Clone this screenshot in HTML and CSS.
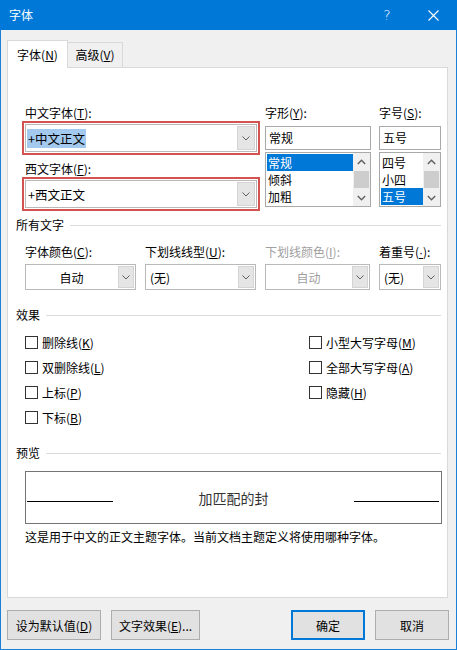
FILE: index.html
```html
<!DOCTYPE html>
<html lang="zh-CN">
<head>
<meta charset="utf-8">
<title>字体</title>
<link rel="stylesheet" href="styles.css">
</head>
<body>
<div class="window">
  <div class="titlebar">
    <span class="title">字体</span>
    <span class="tbtn help">?</span>
    <span class="tbtn close"><svg width="11" height="11" viewBox="0 0 11 11"><path d="M0.5 0.5L10.5 10.5M10.5 0.5L0.5 10.5" stroke="#fff" stroke-width="1.1" fill="none"/></svg></span>
  </div>
  <div class="body">
    <div class="tabs">
      <div class="tab active">字体(<u>N</u>)</div>
      <div class="tab">高级(<u>V</u>)</div>
    </div>
    <div class="panel">
      <div class="top">
        <div class="col col1">
          <div class="label ind">中文字体(<u>T</u>):</div>
          <div class="redbox">
            <div class="combo big">
              <span class="val"><span class="hl">+中文正文</span></span>
              <span class="drop"><svg width="8" height="5" viewBox="0 0 8 5"><path d="M0.5 0.5L4 4L7.5 0.5" stroke="#606060" fill="none"/></svg></span>
            </div>
          </div>
          <div class="label ind l2">西文字体(<u>F</u>):</div>
          <div class="redbox">
            <div class="combo big">
              <span class="val"><span class="plain">+西文正文</span></span>
              <span class="drop"><svg width="8" height="5" viewBox="0 0 8 5"><path d="M0.5 0.5L4 4L7.5 0.5" stroke="#606060" fill="none"/></svg></span>
            </div>
          </div>
        </div>
        <div class="col col2">
          <div class="label">字形(<u>Y</u>):</div>
          <div class="input">常规</div>
          <div class="listbox">
            <div class="items">
              <div class="item selected">常规</div>
              <div class="item">倾斜</div>
              <div class="item">加粗</div>
            </div>
            <div class="scroll">
              <span class="arr"><svg width="9" height="6" viewBox="0 0 9 6"><path d="M0.8 5L4.5 1.2L8.2 5" stroke="#606060" stroke-width="1.4" fill="none"/></svg></span>
              <span class="track"><span class="thumb"></span></span>
              <span class="arr"><svg width="9" height="6" viewBox="0 0 9 6"><path d="M0.8 1L4.5 4.8L8.2 1" stroke="#606060" stroke-width="1.4" fill="none"/></svg></span>
            </div>
          </div>
        </div>
        <div class="col col3">
          <div class="label">字号(<u>S</u>):</div>
          <div class="input">五号</div>
          <div class="listbox">
            <div class="items">
              <div class="item">四号</div>
              <div class="item">小四</div>
              <div class="item selected">五号</div>
            </div>
            <div class="scroll">
              <span class="arr"><svg width="9" height="6" viewBox="0 0 9 6"><path d="M0.8 5L4.5 1.2L8.2 5" stroke="#606060" stroke-width="1.4" fill="none"/></svg></span>
              <span class="track"><span class="thumb"></span></span>
              <span class="arr"><svg width="9" height="6" viewBox="0 0 9 6"><path d="M0.8 1L4.5 4.8L8.2 1" stroke="#606060" stroke-width="1.4" fill="none"/></svg></span>
            </div>
          </div>
        </div>
      </div>

      <div class="sect s1">所有文字</div>
      <div class="fields">
        <div class="field">
          <div class="label">字体颜色(<u>C</u>):</div>
          <div class="combo small"><span class="val center">自动</span><span class="drop"><svg width="8" height="5" viewBox="0 0 8 5"><path d="M0.5 0.5L4 4L7.5 0.5" stroke="#606060" fill="none"/></svg></span></div>
        </div>
        <div class="field">
          <div class="label">下划线线型(<u>U</u>):</div>
          <div class="combo small"><span class="val">(无)</span><span class="drop"><svg width="8" height="5" viewBox="0 0 8 5"><path d="M0.5 0.5L4 4L7.5 0.5" stroke="#606060" fill="none"/></svg></span></div>
        </div>
        <div class="field">
          <div class="label disabled">下划线颜色(<u>I</u>):</div>
          <div class="combo small dis"><span class="val center">自动</span><span class="drop"><svg width="8" height="5" viewBox="0 0 8 5"><path d="M0.5 0.5L4 4L7.5 0.5" stroke="#606060" fill="none"/></svg></span></div>
        </div>
        <div class="field">
          <div class="label">着重号(<u class="dot">·</u>):</div>
          <div class="combo small"><span class="val">(无)</span><span class="drop"><svg width="8" height="5" viewBox="0 0 8 5"><path d="M0.5 0.5L4 4L7.5 0.5" stroke="#606060" fill="none"/></svg></span></div>
        </div>
      </div>

      <div class="sect s2">效果</div>
      <div class="checks">
        <label class="check"><span class="box"></span>删除线(<u>K</u>)</label>
        <label class="check"><span class="box"></span>小型大写字母(<u>M</u>)</label>
        <label class="check"><span class="box"></span>双删除线(<u>L</u>)</label>
        <label class="check"><span class="box"></span>全部大写字母(<u>A</u>)</label>
        <label class="check"><span class="box"></span>上标(<u>P</u>)</label>
        <label class="check"><span class="box"></span>隐藏(<u>H</u>)</label>
        <label class="check"><span class="box"></span>下标(<u>B</u>)</label>
      </div>

      <div class="sect s3">预览</div>
      <div class="preview">
        <span class="pline left"></span>
        <span class="ptext">加匹配的封</span>
        <span class="pline right"></span>
      </div>
      <div class="desc">这是用于中文的正文主题字体。当前文档主题定义将使用哪种字体。</div>
    </div>

    <div class="buttons">
      <div class="btn b1">设为默认值(<u>D</u>)</div>
      <div class="btn b2">文字效果(<u>E</u>)...</div>
      <div class="spacer"></div>
      <div class="btn b3 default">确定</div>
      <div class="btn b4">取消</div>
    </div>
  </div>
</div>
</body>
</html>
```
FILE: styles.css
```css
* { box-sizing: border-box; }
html, body { margin: 0; padding: 0; }
body {
  width: 457px;
  height: 650px;
  overflow: hidden;
  font-family: "Noto Sans CJK SC", "Microsoft YaHei", sans-serif;
  font-size: 12px;
  color: #000;
  background: #f0f0f0;
}
u { text-decoration: underline; text-underline-offset: 1px; }
u.dot { font-family: "Liberation Sans", sans-serif; }

.window {
  width: 457px;
  height: 650px;
  border: 1px solid #1a80d8;
  border-top: 0;
  display: flex;
  flex-direction: column;
  background: #f0f0f0;
}
.titlebar {
  flex: none;
  height: 30px;
  margin: 0 -1px;
  background: #0078d7;
  color: #fff;
  display: flex;
  align-items: center;
}
.title { flex: 1; padding-left: 9px; line-height: 30px; }
.tbtn {
  width: 46px;
  height: 30px;
  display: flex;
  align-items: center;
  justify-content: center;
}
.help { font-size: 14px; font-family: "DejaVu Sans", sans-serif; font-weight: 300; }
.close { width: 47px; }

.body {
  flex: 1;
  display: flex;
  flex-direction: column;
  padding: 10px 8px 0 6px;
}
.tabs {
  height: 27px;
  display: flex;
  align-items: flex-start;
  position: relative;
  z-index: 1;
}
.tab {
  text-align: center;
  border: 1px solid #d9d9d9;
  border-bottom: 0;
}
.tab.active {
  width: 61px;
  height: 28px;
  line-height: 27px;
  background: #fff;
}
.tab:not(.active) {
  width: 55px;
  height: 25px;
  margin-top: 2px;
  line-height: 24px;
  border-left: 0;
  background: #f0f0f0;
}

.panel {
  flex: none;
  height: 531px;
  background: #fff;
  border: 1px solid #d9d9d9;
}

.label { line-height: 16px; height: 16px; white-space: nowrap; }
.label.ind { padding-left: 3px; }
.label.disabled { color: #a0a0a0; }

.top {
  display: flex;
  align-items: flex-start;
  margin: 37px 0 0 14px;
}
.col { display: flex; flex-direction: column; }
.col1 { width: 238px; }
.col2 { width: 106px; margin-left: 5px; }
.col3 { width: 62px; margin-left: 8px; }
.l2 { margin-top: 6px; }

.redbox {
  border: 2px solid #d4524f;
  padding: 1px;
  height: 34px;
}
.combo {
  display: flex;
  background: #fff;
  border: 1px solid #b9b9b9;
}
.combo.big { height: 28px; }
.combo .val {
  flex: 1;
  display: flex;
  align-items: center;
  white-space: nowrap;
}
.combo.big .val { padding-left: 1px; font-size: 12.5px; }
.hl { background: #a3caee; padding: 1px 1px; line-height: 17px; }
.plain { padding: 1px 1px; line-height: 17px; }
.combo .drop {
  width: 18px;
  margin: 1px;
  background: #e5e5e5;
  border: 1px solid #d4d4d4;
  display: flex;
  align-items: center;
  justify-content: center;
}
.combo.small { height: 26px; }
.combo.small .val { padding-left: 4px; }
.combo.small .drop { width: 16px; }
.combo .val.center { justify-content: center; padding-left: 0; }
.combo.dis .val { color: #a0a0a0; }

.input {
  margin-top: 5px;
  height: 24px;
  border: 1px solid #a9a9a9;
  padding-left: 3px;
  line-height: 22px;
}
.listbox {
  margin-top: 2px;
  height: 55px;
  border: 1px solid #a9a9a9;
  display: flex;
}
.items { flex: 1; padding: 1px 0 0 1px; }
.item { height: 17px; line-height: 17px; padding-left: 1px; }
.item.selected { background: #0078d7; color: #fff; }
.scroll {
  width: 17px;
  background: #f0f0f0;
  display: flex;
  flex-direction: column;
}
.arr {
  height: 17px;
  display: flex;
  align-items: center;
  justify-content: center;
}
.track { flex: 1; display: flex; padding: 1px 1px; }
.thumb { flex: 1; background: #cdcdcd; }

.sect {
  display: flex;
  align-items: center;
  line-height: 16px;
  margin-left: 8px;
  margin-right: 6px;
}
.sect::after {
  content: "";
  flex: 1;
  height: 1px;
  margin-left: 6px;
  background: #dcdcdc;
}
.s1 { margin-top: 6px; }
.s2 { margin-top: 17px; }
.s3 { margin-top: 15px; }

.fields {
  margin: 11px 0 0 17px;
  display: grid;
  grid-template-columns: 111px 111px 105px 62px;
  column-gap: 9px;
}
.field .combo { margin-top: 4px; }

.checks {
  margin: 7px 0 0 17px;
  display: grid;
  grid-template-columns: 284px auto;
  grid-auto-rows: 25px;
}
.check {
  display: flex;
  align-items: center;
  white-space: nowrap;
}
.box {
  width: 13px;
  height: 13px;
  border: 1px solid #333;
  background: #fff;
  margin-right: 4px;
  flex: none;
}

.preview {
  margin: 10px 0 0 17px;
  width: 417px;
  height: 53px;
  border: 1px solid #747474;
  display: flex;
  align-items: center;
  padding: 0 2px 0 1px;
}
.pline { height: 1px; background: #000; margin-top: 8px; flex: none; }
.pline.left { width: 86px; }
.pline.right { width: 85px; }
.ptext {
  flex: 1;
  text-align: center;
  font-size: 14px;
  color: #333;
  line-height: 18px;
}
.desc { margin: 5px 0 0 17px; line-height: 16px; }

.buttons {
  margin: 12px -1px 0 0;
  height: 30px;
  display: flex;
}
.btn {
  height: 30px;
  background: #e1e1e1;
  border: 1px solid #adadad;
  display: flex;
  align-items: center;
  justify-content: center;
  white-space: nowrap;
}
.b1 { width: 94px; }
.b2 { width: 89px; margin-left: 10px; }
.spacer { flex: 1; }
.b3 { width: 74px; }
.b4 { width: 74px; margin-left: 10px; }
.btn.default { border: 2px solid #0078d7; }
```
